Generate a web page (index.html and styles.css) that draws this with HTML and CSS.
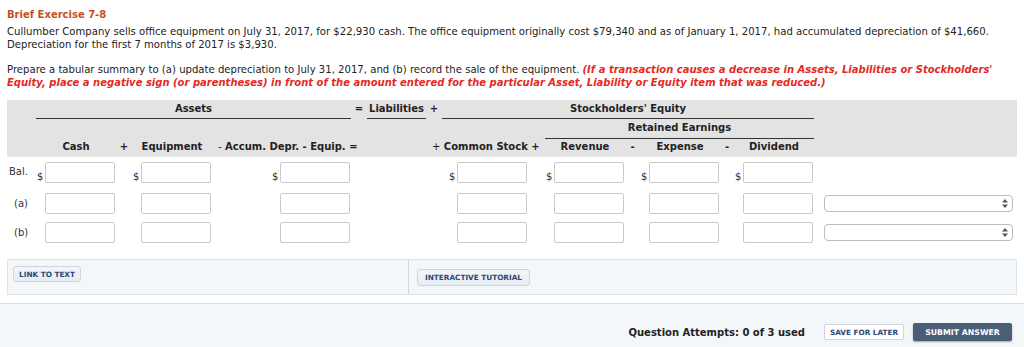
FILE: index.html
```html
<!DOCTYPE html>
<html>
<head>
<meta charset="utf-8">
<link rel="stylesheet" href="styles.css">
</head>
<body>
<div class="page">
  <h1 class="title">Brief Exercise 7-8</h1>
  <p class="para first">Cullumber Company sells office equipment on July 31, 2017, for $22,930 cash. The office equipment originally cost $79,340 and as of January 1, 2017, had accumulated depreciation of $41,660. Depreciation for the first 7 months of 2017 is $3,930.</p>
  <p class="para second">Prepare a tabular summary to (a) update depreciation to July 31, 2017, and (b) record the sale of the equipment. <em class="warn">(If a transaction causes a decrease in Assets, Liabilities or Stockholders' Equity, place a negative sign (or parentheses) in front of the amount entered for the particular Asset, Liability or Equity item that was reduced.)</em></p>

  <div class="sheet">
    <div class="head">
      <div class="hrow hrow1">
        <span class="sp-label"></span>
        <span class="grp grp-assets">Assets</span>
        <span class="op op-eq">=</span>
        <span class="grp grp-liab">Liabilities</span>
        <span class="op op-plus">+</span>
        <span class="grp grp-se">Stockholders' Equity</span>
      </div>
      <div class="hrow hrow2">
        <span class="sp-re"></span>
        <span class="grp grp-re">Retained Earnings</span>
      </div>
      <div class="hrow hrow3">
        <span class="sp-label"></span>
        <span class="col">Cash</span>
        <span class="sep sep-a">+</span>
        <span class="col">Equipment</span>
        <span class="col-accum"><span class="thin">-</span> Accum. Depr. - Equip. =</span>
        <span class="col-common"><span class="thin">+</span> Common Stock +</span>
        <span class="col">Revenue</span>
        <span class="sep sep-b">-</span>
        <span class="col">Expense</span>
        <span class="sep sep-c">-</span>
        <span class="col">Dividend</span>
      </div>
    </div>

    <div class="row row-bal">
      <span class="lbl lbl-bal">Bal.</span>
      <span class="cell c1"><span class="cur">$</span><input class="box" type="text"></span>
      <span class="cell c2"><span class="cur">$</span><input class="box" type="text"></span>
      <span class="cell c3"><span class="cur">$</span><input class="box" type="text"></span>
      <span class="cell c4"><span class="cur">$</span><input class="box" type="text"></span>
      <span class="cell c5"><span class="cur">$</span><input class="box" type="text"></span>
      <span class="cell c6"><span class="cur">$</span><input class="box" type="text"></span>
      <span class="cell c7"><span class="cur">$</span><input class="box" type="text"></span>
    </div>
    <div class="row row-a">
      <span class="lbl lbl-tx">(a)</span>
      <span class="cell c1"><span class="cur"></span><input class="box" type="text"></span>
      <span class="cell c2"><span class="cur"></span><input class="box" type="text"></span>
      <span class="cell c3"><span class="cur"></span><input class="box" type="text"></span>
      <span class="cell c4"><span class="cur"></span><input class="box" type="text"></span>
      <span class="cell c5"><span class="cur"></span><input class="box" type="text"></span>
      <span class="cell c6"><span class="cur"></span><input class="box" type="text"></span>
      <span class="cell c7"><span class="cur"></span><input class="box" type="text"></span>
      <span class="pick"><svg class="arrows" width="6" height="9" viewBox="0 0 6 9"><path d="M3 0 L6 3.5 L0 3.5 Z M3 9 L6 5.5 L0 5.5 Z" fill="#555"/></svg></span>
    </div>
    <div class="row row-b">
      <span class="lbl lbl-tx">(b)</span>
      <span class="cell c1"><span class="cur"></span><input class="box" type="text"></span>
      <span class="cell c2"><span class="cur"></span><input class="box" type="text"></span>
      <span class="cell c3"><span class="cur"></span><input class="box" type="text"></span>
      <span class="cell c4"><span class="cur"></span><input class="box" type="text"></span>
      <span class="cell c5"><span class="cur"></span><input class="box" type="text"></span>
      <span class="cell c6"><span class="cur"></span><input class="box" type="text"></span>
      <span class="cell c7"><span class="cur"></span><input class="box" type="text"></span>
      <span class="pick"><svg class="arrows" width="6" height="9" viewBox="0 0 6 9"><path d="M3 0 L6 3.5 L0 3.5 Z M3 9 L6 5.5 L0 5.5 Z" fill="#555"/></svg></span>
    </div>
  </div>

  <div class="links">
    <div class="pane pane-left"><span class="lbtn lbtn-text">LINK TO TEXT</span></div>
    <div class="pane pane-right"><span class="lbtn lbtn-tut">INTERACTIVE TUTORIAL</span></div>
  </div>
</div>
<div class="footer">
  <span class="attempts">Question Attempts: 0 of 3 used</span>
  <span class="btn-save">SAVE FOR LATER</span>
  <span class="btn-submit">SUBMIT ANSWER</span>
</div>
</body>
</html>
```

FILE: styles.css
```css
html, body {
  margin: 0;
  padding: 0;
  background: #ffffff;
}
body {
  font-family: "DejaVu Sans", Verdana, sans-serif;
  font-size: 10px;
  color: #222222;
  height: 347px;
  overflow: hidden;
}
.page {
  padding: 0 7px;
}
.title {
  margin: 0;
  padding-top: 8px;
  font-size: 10px;
  line-height: 13px;
  font-weight: bold;
  color: #c4501d;
}
.para {
  margin: 0;
  font-size: 10.1px;
  line-height: 12.5px;
}
.para.first { margin-top: 5px; }
.para.second { margin-top: 13px; }
.warn {
  color: #e4291f;
  font-size: 10px;
  font-weight: bold;
  font-style: italic;
}

.sheet {
  margin-top: 11px;
  width: 1010px;
}
.head {
  background: #e3e3e3;
  height: 57px;
}
.hrow {
  display: flex;
  font-weight: bold;
}
.hrow1 { height: 19px; }
.sp-label { width: 29px; flex: none; }
.grp {
  flex: none;
  text-align: center;
  height: 18px;
  line-height: 17px;
  border-bottom: 1px solid #333333;
}
.grp-assets { width: 315px; }
.grp-liab { width: 59px; }
.grp-se { width: 372px; }
.op {
  flex: none;
  width: 16px;
  text-align: center;
  line-height: 17px;
}
.hrow2 { height: 20px; }
.sp-re { width: 538px; flex: none; }
.grp-re {
  width: 269px;
  height: 19px;
  line-height: 17px;
}
.hrow3 {
  height: 18px;
  line-height: 15px;
}
.hrow3 .sp-label { width: 30px; }
.col { width: 78px; flex: none; text-align: center; }
.sep { flex: none; text-align: center; }
.sep-a { width: 18px; }
.sep-b { width: 17px; }
.sep-c { width: 16px; }
.col-accum { width: 214px; padding-left: 7px; flex: none; }
.col-common { width: 114px; flex: none; }
.thin { font-weight: normal; }

.row {
  display: flex;
  align-items: center;
  height: 21px;
}
.row-bal { margin-top: 5px; }
.row-a { margin-top: 10px; }
.row-b { margin-top: 8px; }
.lbl {
  width: 30px;
  flex: none;
  color: #333333;
  box-sizing: border-box;
}
.lbl-bal { padding-left: 2px; margin-top: -2px; }
.lbl-tx { padding-left: 7px; }
.cell {
  display: flex;
  align-items: flex-end;
  flex: none;
  height: 21px;
}
.cur {
  width: 8px;
  line-height: 10px;
  font-size: 10px;
  color: #333333;
  padding-bottom: 1px;
}
.box {
  width: 70px;
  height: 21px;
  box-sizing: border-box;
  margin: 0;
  padding: 0 3px;
  border: 1px solid #c9c9c9;
  border-radius: 2px;
  background: #ffffff;
}
.c2 { margin-left: 18px; }
.c3 { margin-left: 61px; }
.c4 { margin-left: 99px; }
.c5 { margin-left: 19px; }
.c6 { margin-left: 17px; }
.c7 { margin-left: 16px; }
.pick {
  margin-left: 11px;
  width: 189px;
  height: 17px;
  box-sizing: border-box;
  border: 1px solid #bdbdbd;
  border-radius: 4px;
  background: #ffffff;
  display: flex;
  align-items: center;
  justify-content: flex-end;
  padding-right: 4px;
}

.links {
  margin-top: 16px;
  width: 1010px;
  height: 36px;
  box-sizing: border-box;
  border: 1px solid #dce2e9;
  background: #f4f7fa;
  display: flex;
}
.pane { box-sizing: border-box; }
.pane-left {
  width: 401px;
  border-right: 1px solid #cfd6de;
  padding: 6px 0 0 5px;
}
.pane-right {
  flex: 1;
  padding-left: 8px;
  display: flex;
  align-items: center;
}
.lbtn {
  display: inline-flex;
  align-items: center;
  justify-content: center;
  box-sizing: border-box;
  border: 1px solid #cdd4dd;
  border-radius: 3px;
  background: linear-gradient(#f3f6f9, #e7ecf2);
  color: #2b4877;
  font-weight: bold;
  font-size: 7.3px;
}
.lbtn-text { width: 68px; height: 16px; }
.lbtn-tut { width: 113px; height: 17px; }

.footer {
  margin-top: 8px;
  border-top: 1px solid #d9dee4;
  background: #f4f7fa;
  height: 44px;
  display: flex;
  align-items: center;
  justify-content: flex-end;
  padding-right: 12px;
}
.attempts {
  font-weight: bold;
  color: #222222;
  margin-top: 12px;
}
.btn-save {
  margin-left: 19px;
  margin-top: 12px;
  width: 80px;
  height: 16px;
  box-sizing: border-box;
  border: 1px solid #cfd6df;
  border-radius: 2px;
  background: #ffffff;
  color: #2b4877;
  font-weight: bold;
  font-size: 7.3px;
  display: flex;
  align-items: center;
  justify-content: center;
}
.btn-submit {
  margin-left: 9px;
  margin-top: 12px;
  width: 99px;
  height: 18px;
  box-sizing: border-box;
  border-radius: 2px;
  background: #4a5e78;
  box-shadow: 0 1px 2px rgba(0,0,0,0.35);
  color: #ffffff;
  font-weight: bold;
  font-size: 7.8px;
  display: flex;
  align-items: center;
  justify-content: center;
}
```
